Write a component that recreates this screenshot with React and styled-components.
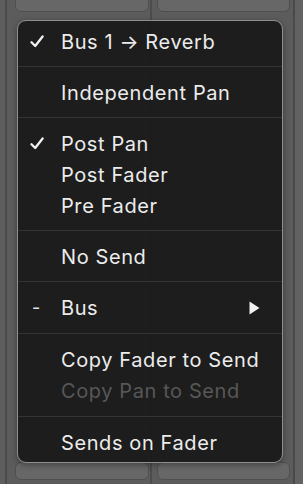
import React from "react";
import styled, { createGlobalStyle } from "styled-components";

const Global = createGlobalStyle`
  html, body {
    margin: 0;
    padding: 0;
    background: #5c5c5c;
  }
  body {
    width: 303px;
    height: 484px;
    overflow: hidden;
    font-family: Inter, "Noto Sans", "Liberation Sans", sans-serif;
  }
`;

const Stage = styled.div`
  position: relative;
  width: 303px;
  height: 484px;
  background: #5c5c5c;
  display: grid;
  grid-template-columns: 5px 2px 143px 2px 141px 2px 8px;
  overflow: hidden;
`;

const Edge = styled.div`
  background: ${(p) => p.$color};
`;

const Strip = styled.div`
  display: flex;
  flex-direction: column;
  justify-content: space-between;
  padding: 0 ${(p) => p.$right}px 4px ${(p) => p.$left}px;
`;

const Slot = styled.div`
  height: ${(p) => p.$h}px;
  margin-top: ${(p) => p.$top || 0}px;
  background: #676767;
  border: 1px solid #4f4f4f;
  border-radius: 6px;
`;

const Menu = styled.div`
  position: absolute;
  left: 17px;
  top: 20px;
  width: 264px;
  background: rgba(27, 27, 27, 0.97);
  border: 1px solid #8f8f8f;
  border-radius: 9px;
  box-shadow: 0 2px 6px rgba(0, 0, 0, 0.35);
  display: flex;
  flex-direction: column;
`;

const Section = styled.div`
  padding: 10px 0 ${(p) => p.$bottom || 9}px;
  border-top: 1px solid #343434;

  &:first-child {
    border-top: none;
    padding-top: 5px;
  }
  &:last-child {
    padding-bottom: 4px;
  }
`;

const Row = styled.div`
  height: 31px;
  display: grid;
  grid-template-columns: 31px 1fr 20px;
  align-items: center;
  padding: 0 22px 0 12px;
  color: ${(p) => (p.$disabled ? "#575757" : "#ececec")};
  font-size: 20px;
  letter-spacing: 0.6px;
  white-space: nowrap;
`;

const Mark = styled.span`
  display: flex;
  align-items: center;
  padding-left: 2px;
  color: #e6e6e6;
  font-size: 18px;
`;

const Arrow = styled.span`
  display: flex;
  justify-content: flex-end;
`;

const Check = () => (
  <svg width="14" height="13" viewBox="0 0 14 13" style={{ marginLeft: -2 }}>
    <path d="M1.5 7.2 L5.2 11 L12.6 1.5" fill="none" stroke="#f2f2f2" strokeWidth="2.3" strokeLinecap="round" strokeLinejoin="round" />
  </svg>
);

const Triangle = () => (
  <svg width="11" height="14" viewBox="0 0 11 14">
    <path d="M0.5 0.5 L10.5 7 L0.5 13.5 Z" fill="#f2f2f2" />
  </svg>
);

const sections = [
  { items: [{ label: "Bus 1 → Reverb", mark: "check" }] },
  { items: [{ label: "Independent Pan" }] },
  { items: [{ label: "Post Pan", mark: "check" }, { label: "Post Fader" }, { label: "Pre Fader" }] },
  { items: [{ label: "No Send" }] },
  { items: [{ label: "Bus", mark: "dash", sub: true }], bottom: 10 },
  { items: [{ label: "Copy Fader to Send" }, { label: "Copy Pan to Send", disabled: true }], bottom: 10 },
  { items: [{ label: "Sends on Fader" }] },
];

const App = () => {
  return (
    <>
      <Global />
      <Stage>
        <Edge $color="#5e5e5e" />
        <Edge $color="#4a4a4a" />
        <Strip $left={8} $right={1}>
          <Slot $h={20} $top={-10} />
          <Slot $h={16} />
        </Strip>
        <Edge $color="#4c4c4c" />
        <Strip $left={5} $right={3}>
          <Slot $h={20} $top={-10} />
          <Slot $h={16} />
        </Strip>
        <Edge $color="#4a4a4a" />
        <Edge $color="#626262" />

        <Menu>
          {sections.map((section, i) => (
            <Section key={i} $bottom={section.bottom}>
              {section.items.map((item) => (
                <Row key={item.label} $disabled={item.disabled}>
                  <Mark>
                    {item.mark === "check" && <Check />}
                    {item.mark === "dash" && "-"}
                  </Mark>
                  <span>{item.label}</span>
                  <Arrow>{item.sub && <Triangle />}</Arrow>
                </Row>
              ))}
            </Section>
          ))}
        </Menu>
      </Stage>
    </>
  );
};

export default App;
